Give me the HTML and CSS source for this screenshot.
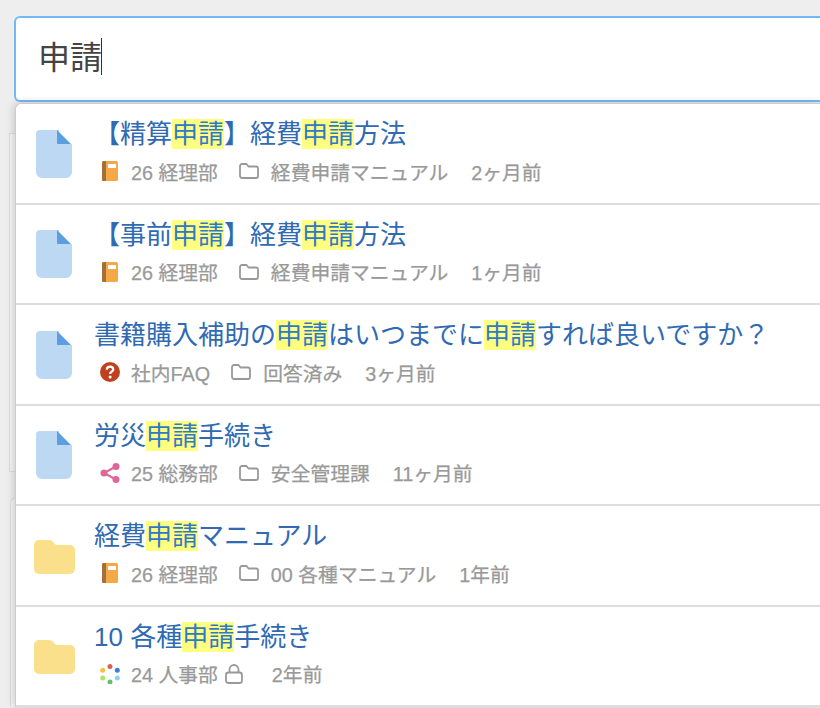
FILE: index.html

```html
<!DOCTYPE html>
<html lang="ja">
<head>
  <meta charset="UTF-8" />
  <meta name="viewport" content="width=device-width, initial-scale=1.0"/>
  <title>検索</title>
  <link rel="stylesheet" href="styles.css">
</head>
<body>
  <svg class="defs" width="0" height="0" aria-hidden="true">
    <symbol id="i-file" viewBox="0 0 44 48">
      <path d="M8 0h19v14a2 2 0 0 0 2 2h11v26a6 6 0 0 1-6 6H10a6 6 0 0 1-6-6V4a4 4 0 0 1 4-4z" fill="#bcd8f2"/>
      <path d="M25 0l15 15H27a2 2 0 0 1-2-2z" fill="#5c9fe0"/>
      <path d="M21 0h4v14h15v2H29a8 8 0 0 1-8-8z" fill="#bcd8f2"/>
    </symbol>
    <symbol id="i-folder" viewBox="0 0 44 36">
      <path d="M7 1h10a6 6 0 0 1 5 3l2 2h14a5 5 0 0 1 5 5v19a5 5 0 0 1-5 5H7a5 5 0 0 1-5-5V6a5 5 0 0 1 5-5z" fill="#fbe08c"/>
    </symbol>
    <symbol id="i-book" viewBox="0 0 20 20">
      <rect x="2" y="0" width="16" height="20" rx="1.5" fill="#f4a848"/>
      <path d="M3.500 0H6v20H3.500A1.500 1.500 0 0 1 2 18.500v-17A1.500 1.500 0 0 1 3.500 0z" fill="#a3703a"/>
      <rect x="8" y="3" width="8" height="4" rx=".5" fill="#fff"/>
    </symbol>
    <symbol id="i-question" viewBox="0 0 20 20">
      <circle cx="10" cy="10" r="10" fill="#bf421f"/>
      <path d="M6.800 7.600C6.900 5.600 8.300 4.700 10 4.700c1.800 0 3.200 1 3.200 2.700 0 2.300-3.100 2.300-3.100 4.600" fill="none" stroke="#fff" stroke-width="2.300"/>
      <circle cx="10.100" cy="15" r="1.500" fill="#fff"/>
    </symbol>
    <symbol id="i-share" viewBox="0 0 20 20">
      <path d="M16 3.500L4 10l12 6.500" fill="none" stroke="#e0669a" stroke-width="2"/>
      <circle cx="16" cy="3.500" r="3.500" fill="#e0669a"/>
      <circle cx="4" cy="10" r="3.500" fill="#e0669a"/>
      <circle cx="16" cy="16.500" r="3.500" fill="#e0669a"/>
    </symbol>
    <symbol id="i-dots" viewBox="0 0 20 20">
      <circle cx="10" cy="2.500" r="2.500" fill="#d9605a"/>
      <circle cx="17.300" cy="6.300" r="2.500" fill="#3f7fdc"/>
      <circle cx="17.300" cy="14" r="2.500" fill="#8ed2f2"/>
      <circle cx="10" cy="18" r="2.500" fill="#63bd6c"/>
      <circle cx="2.700" cy="14" r="2.500" fill="#b3e26b"/>
      <circle cx="2.700" cy="6.300" r="2.500" fill="#f4c33f"/>
    </symbol>
    <symbol id="i-outline-folder" viewBox="0 0 20 18">
      <path d="M3 2h4.500l2 2.500H17a2 2 0 0 1 2 2V14a2 2 0 0 1-2 2H3a2 2 0 0 1-2-2V4a2 2 0 0 1 2-2z" fill="none" stroke="#999" stroke-width="1.800" stroke-linejoin="round"/>
    </symbol>
    <symbol id="i-lock" viewBox="0 0 18 20">
      <rect x="1" y="8.500" width="16" height="10.500" rx="2.500" fill="none" stroke="#999" stroke-width="1.800"/>
      <path d="M4.500 8.500V5.500a4.500 4.500 0 0 1 9 0v3" fill="none" stroke="#999" stroke-width="1.800"/>
    </symbol>
  </svg>

  <div class="search-box">
    <span class="query">申請</span><span class="caret"></span>
  </div>

  <div class="back-card back-card-top"></div>
  <div class="back-card back-card-bottom"></div>

  <ul class="results">
    <li class="result">
      <svg class="kind kind-file"><use href="#i-file"/></svg>
      <div class="body">
        <a class="title">【精算<mark>申請</mark>】経費<mark>申請</mark>方法</a>
        <div class="meta">
          <svg class="team"><use href="#i-book"/></svg>
          <span>26 経理部</span>
          <svg class="folder"><use href="#i-outline-folder"/></svg>
          <span>経費申請マニュアル</span>
          <span class="date">2ヶ月前</span>
        </div>
      </div>
    </li>
    <li class="result">
      <svg class="kind kind-file"><use href="#i-file"/></svg>
      <div class="body">
        <a class="title">【事前<mark>申請</mark>】経費<mark>申請</mark>方法</a>
        <div class="meta">
          <svg class="team"><use href="#i-book"/></svg>
          <span>26 経理部</span>
          <svg class="folder"><use href="#i-outline-folder"/></svg>
          <span>経費申請マニュアル</span>
          <span class="date">1ヶ月前</span>
        </div>
      </div>
    </li>
    <li class="result">
      <svg class="kind kind-file"><use href="#i-file"/></svg>
      <div class="body">
        <a class="title">書籍購入補助の<mark>申請</mark>はいつまでに<mark>申請</mark>すれば良いですか？</a>
        <div class="meta">
          <svg class="team"><use href="#i-question"/></svg>
          <span>社内FAQ</span>
          <svg class="folder"><use href="#i-outline-folder"/></svg>
          <span>回答済み</span>
          <span class="date">3ヶ月前</span>
        </div>
      </div>
    </li>
    <li class="result">
      <svg class="kind kind-file"><use href="#i-file"/></svg>
      <div class="body">
        <a class="title">労災<mark>申請</mark>手続き</a>
        <div class="meta">
          <svg class="team"><use href="#i-share"/></svg>
          <span>25 総務部</span>
          <svg class="folder"><use href="#i-outline-folder"/></svg>
          <span>安全管理課</span>
          <span class="date">11ヶ月前</span>
        </div>
      </div>
    </li>
    <li class="result">
      <svg class="kind kind-folder"><use href="#i-folder"/></svg>
      <div class="body">
        <a class="title">経費<mark>申請</mark>マニュアル</a>
        <div class="meta">
          <svg class="team"><use href="#i-book"/></svg>
          <span>26 経理部</span>
          <svg class="folder"><use href="#i-outline-folder"/></svg>
          <span>00 各種マニュアル</span>
          <span class="date">1年前</span>
        </div>
      </div>
    </li>
    <li class="result">
      <svg class="kind kind-folder"><use href="#i-folder"/></svg>
      <div class="body">
        <a class="title">10 各種<mark>申請</mark>手続き</a>
        <div class="meta">
          <svg class="team"><use href="#i-dots"/></svg>
          <span>24 人事部</span>
          <svg class="lock"><use href="#i-lock"/></svg>
          <span class="date date-locked">2年前</span>
        </div>
      </div>
    </li>
  </ul>
</body>
</html>
```

FILE: styles.css

```css
html, body {
  height: 100%;
}
body {
  margin: 0;
  position: relative;
  overflow: hidden;
  background: #eee;
  font-family: "Liberation Sans", "Noto Sans CJK JP", sans-serif;
}
.defs {
  position: absolute;
}
.search-box {
  display: flex;
  align-items: center;
  box-sizing: border-box;
  width: 806px;
  height: 86px;
  margin: 16px 0 0 14px;
  padding: 0 0 8px 22px;
  background: #fff;
  border: 2px solid #74b8f8;
  border-right: 0;
  border-radius: 6px 0 0 6px;
  font-size: 32px;
  color: #444;
}
.caret {
  width: 1px;
  height: 37px;
  margin: 2px 0 0 -1px;
  background: #333;
}
.back-card {
  box-sizing: border-box;
  width: 811px;
  margin-left: 9px;
  background: #f4f4f4;
  border: 1px solid #ddd;
  border-right: 0;
}
.back-card-top {
  height: 339px;
  margin-top: 31px;
}
.back-card-bottom {
  width: 810px;
  height: 210px;
  margin-top: 25px;
  margin-left: 10px;
  border-bottom: 0;
  border-radius: 6px 0 0 0;
}
.results {
  position: absolute;
  top: 103.3px;
  left: 15px;
  right: 0;
  margin: 0;
  padding: 0;
  list-style: none;
  background: #fff;
  border-top: 1px solid #ccc;
  border-left: 1px solid #ccc;
  border-radius: 6px 0 0 0;
  box-shadow: -1px 0 8px rgba(0, 0, 0, 0.18);
}
.result {
  display: flex;
  align-items: center;
  box-sizing: border-box;
  height: 100.5px;
  padding: 0 0 0 16px;
  border-bottom: 2px solid #ddd;
}
.kind {
  flex: none;
  width: 44px;
}
.kind-file {
  height: 48px;
}
.kind-folder {
  height: 36px;
  margin-top: 2px;
}
.body {
  display: flex;
  flex-direction: column;
  gap: 7px;
  margin-left: 18px;
  margin-top: -2px;
}
.title {
  font-size: 26px;
  line-height: 30px;
  color: #2f6ab3;
  white-space: nowrap;
}
mark {
  background: #ffff80;
  color: #2f7ac8;
}
.meta {
  display: flex;
  align-items: center;
  height: 30px;
  padding-left: 6px;
  font-size: 19.8px;
  color: #999;
  white-space: nowrap;
  -webkit-text-stroke: 0.25px #999;
}
.team {
  flex: none;
  width: 20px;
  height: 20px;
  margin-right: 11px;
}
.folder {
  flex: none;
  width: 20px;
  height: 18px;
  margin: 0 12px 0 21px;
}
.lock {
  flex: none;
  width: 18px;
  height: 20px;
  margin-left: 7px;
}
.date {
  margin-left: 23px;
}
.date-locked {
  margin-left: 29px;
}
```
